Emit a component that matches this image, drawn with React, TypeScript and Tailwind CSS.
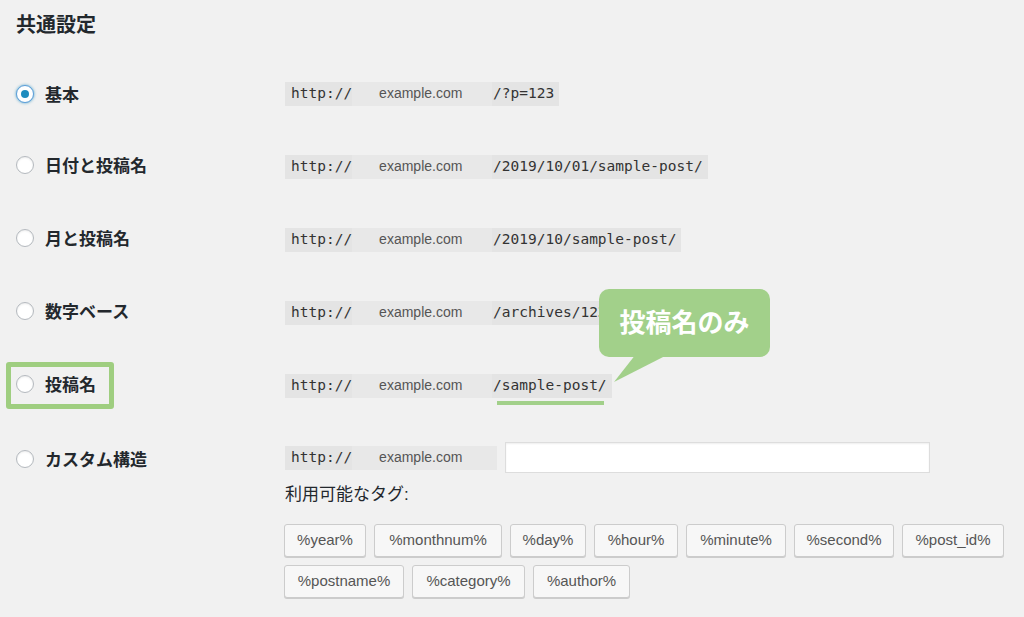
import React from 'react';
import clsx from 'clsx';

const rows = [
    { label: '基本', path: '/?p=123', checked: true },
    { label: '日付と投稿名', path: '/2019/10/01/sample-post/' },
    { label: '月と投稿名', path: '/2019/10/sample-post/' },
    { label: '数字ベース', path: '/archives/123' },
    { label: '投稿名', path: '/sample-post/', highlight: true },
];

const tags = [
    { name: '%year%', w: 'w-[82px]' },
    { name: '%monthnum%', w: 'w-[128px]' },
    { name: '%day%', w: 'w-[76px]' },
    { name: '%hour%', w: 'w-[84px]' },
    { name: '%minute%', w: 'w-[100px]' },
    { name: '%second%', w: 'w-[100px]' },
    { name: '%post_id%', w: 'w-[102px]' },
    { name: '%postname%', w: 'w-[120px]' },
    { name: '%category%', w: 'w-[113px]' },
    { name: '%author%', w: 'w-[97px]' },
];

const Radio = ({ checked }: { checked?: boolean }) => (
    <span
        className={clsx(
            'w-[18px] h-[18px] rounded-full border bg-white flex items-center justify-center shrink-0',
            checked
                ? 'border-[#5b9dd9] shadow-[0_0_3px_rgba(30,140,190,0.8)]'
                : 'border-[#b4b9be] shadow-[inset_0_1px_2px_rgba(0,0,0,0.08)]'
        )}
    >
        {checked && <span className="w-[8px] h-[8px] rounded-full bg-[#1e8cbe]" />}
    </span>
);

const Url = ({ path, domainW = 'w-[140px]' }: { path?: string; domainW?: string }) => (
    <code className="flex items-center h-[24px] bg-[#e4e4e4] pl-[6px] text-[14.5px] font-['DejaVu_Sans_Mono',monospace] text-[#333]">
        <span>http://</span>
        <span className={clsx('h-full flex items-center pl-[27px] bg-[#e8e8e8] text-[14px] text-[#555] font-["Liberation_Sans",sans-serif]', domainW)}>
            example.com
        </span>
        {path && <span className="pl-[1px] pr-[5px]">{path}</span>}
    </code>
);

const App = () => {
    return (
        <div className="relative w-[1024px] h-[617px] overflow-hidden bg-[#f1f1f1] text-[#23282d] font-['Liberation_Sans','Noto_Sans_CJK_JP',sans-serif]">
            <h2 className="pl-[16px] pt-[11px] text-[20px] leading-[28px] font-bold">共通設定</h2>

            <div className="mt-[18px] flex flex-col">
                {rows.map((r) => (
                    <div key={r.label} className="h-[73px] flex items-center">
                        <div className="w-[285px] pl-[16px]">
                            <label className="relative h-[24px] inline-flex items-center gap-[11px] text-[17px] font-bold">
                                <Radio checked={r.checked} />
                                <span className="relative top-[2px]">{r.label}</span>
                                {r.highlight && (
                                    <span className="absolute left-[-10px] top-[-10px] w-[108px] h-[47px] border-[5px] border-[#9fce80] rounded-[3px]" />
                                )}
                            </label>
                        </div>
                        <div className="relative">
                            <Url path={r.path} />
                            {r.highlight && (
                                <span className="absolute left-[212px] top-[27px] w-[107px] h-[4px] bg-[#a2d08a]" />
                            )}
                        </div>
                    </div>
                ))}

                {/* custom structure */}
                <div className="flex pt-[20px]">
                    <div className="w-[285px] pl-[16px] h-[33px] flex items-center">
                        <label className="inline-flex items-center gap-[11px] text-[17px] font-bold">
                            <Radio />
                            <span className="relative top-[2px]">カスタム構造</span>
                        </label>
                    </div>
                    <div className="flex flex-col">
                        <div className="flex items-center gap-[8px]">
                            <Url domainW="w-[145px]" />
                            <input className="w-[425px] h-[31px] bg-white border border-[#ddd] shadow-[inset_0_1px_2px_rgba(0,0,0,0.07)]" />
                        </div>
                        <p className="mt-[10px] text-[17px] leading-[24px] text-[#23282d]">利用可能なタグ:</p>
                        <div className="mt-[17px] ml-[-1px] w-[730px] flex flex-wrap gap-x-[8px] gap-y-[8px]">
                            {tags.map((t) => (
                                <button
                                    key={t.name}
                                    className={clsx(
                                        'h-[33px] bg-[#f7f7f7] border border-[#ccc] rounded-[3px] shadow-[0_1px_0_#ccc] text-[15px] text-[#555]',
                                        t.w
                                    )}
                                >
                                    {t.name}
                                </button>
                            ))}
                        </div>
                    </div>
                </div>
            </div>

            {/* callout */}
            <div className="absolute left-[599px] top-[289px] w-[171px] h-[68px] rounded-[10px] bg-[#a2d08a] flex items-center justify-center text-white text-[26px] font-bold">
                投稿名のみ
            </div>
            <svg className="absolute left-[610px] top-[354px]" width="62" height="30" viewBox="0 0 62 30">
                <polygon points="26,0 59,0 4,28" fill="#a2d08a" />
            </svg>
        </div>
    );
};

export default App;
